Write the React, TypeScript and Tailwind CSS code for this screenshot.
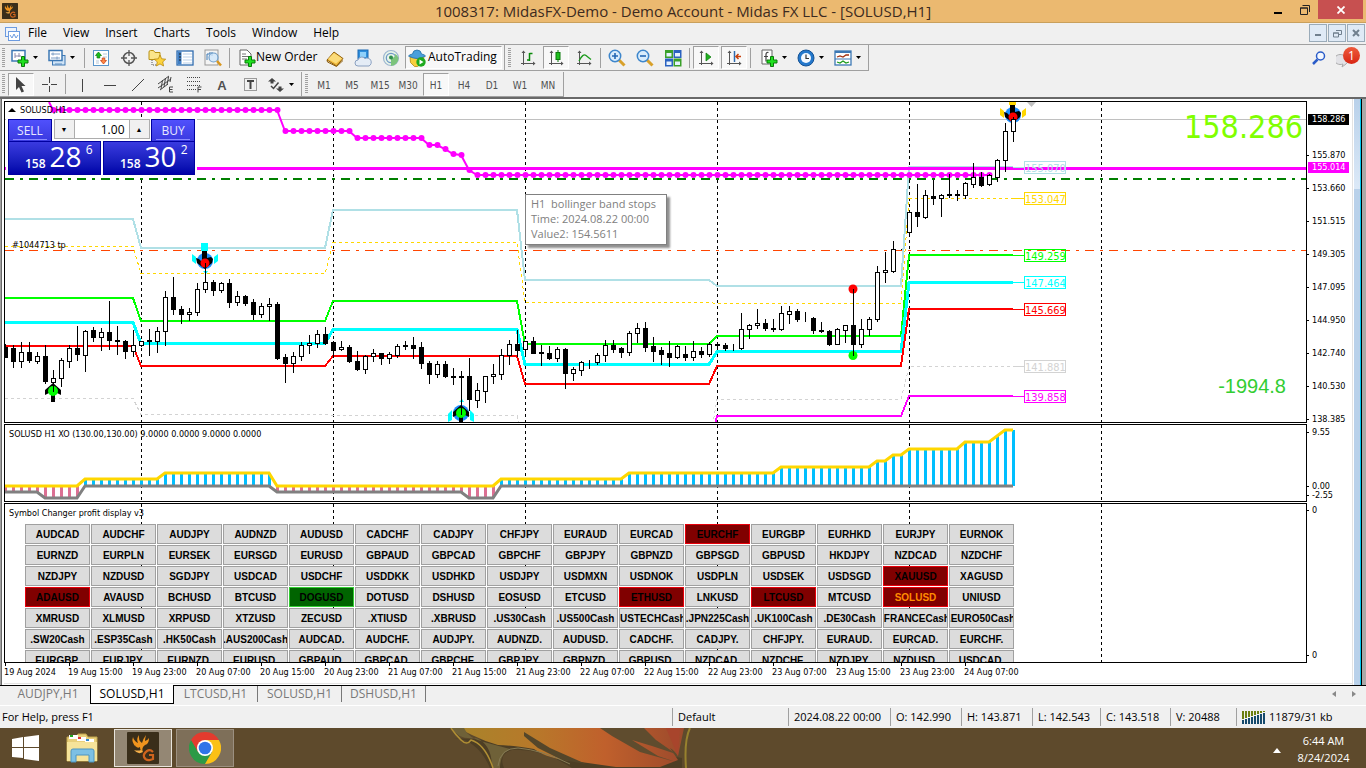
import type { ReactNode } from 'react';

type Candle = [high: number, top: number, bottom: number, low: number, filled: 0 | 1];
type Point = [bar: number, y: number];

const BAR = 8;

// One entry per hour: wick top, body top, body bottom, wick bottom, bearish flag
const CANDLES: Candle[] = [
  [242, 245, 255, 255, 1], [243, 246, 259, 265, 1], [240, 250, 259, 265, 0], [240, 250, 258, 260, 1],
  [250, 254, 259, 261, 0], [243, 254, 279, 281, 1], [268, 276, 280, 289, 0], [256, 258, 276, 284, 0],
  [243, 246, 259, 265, 0], [224, 246, 252, 258, 1], [228, 229, 253, 269, 0], [225, 228, 235, 239, 1],
  [226, 230, 235, 248, 0], [199, 230, 238, 247, 1], [224, 238, 239, 252, 1], [238, 239, 249, 256, 1],
  [228, 243, 249, 254, 0], [239, 239, 243, 244, 0], [227, 238, 239, 253, 1], [225, 229, 239, 250, 0],
  [189, 195, 229, 243, 0], [175, 195, 207, 212, 1], [204, 207, 212, 221, 1], [206, 210, 212, 218, 0],
  [181, 187, 210, 213, 0], [161, 180, 187, 190, 0], [178, 180, 188, 193, 1], [180, 181, 188, 190, 0],
  [177, 181, 200, 205, 1], [189, 194, 200, 203, 0], [193, 194, 201, 203, 1], [197, 200, 212, 217, 1],
  [201, 204, 212, 215, 0], [196, 202, 204, 218, 0], [200, 202, 256, 257, 1], [252, 255, 261, 280, 1],
  [250, 254, 261, 270, 0], [240, 243, 254, 258, 0], [233, 241, 243, 251, 0], [228, 232, 241, 245, 0],
  [225, 232, 241, 242, 1], [239, 240, 248, 255, 1], [239, 245, 247, 248, 0], [243, 245, 259, 260, 1],
  [249, 259, 267, 268, 1], [253, 254, 267, 271, 0], [247, 251, 254, 259, 0], [251, 251, 256, 262, 1],
  [250, 252, 256, 261, 0], [242, 244, 253, 255, 0], [239, 243, 244, 247, 1], [235, 243, 246, 256, 1],
  [240, 245, 261, 266, 1], [259, 261, 272, 281, 1], [259, 262, 272, 275, 0], [259, 262, 274, 275, 1],
  [266, 274, 275, 282, 1], [269, 274, 275, 312, 1], [256, 274, 297, 308, 1], [281, 288, 298, 305, 0],
  [274, 274, 289, 300, 0], [262, 272, 274, 281, 0], [247, 253, 272, 277, 0], [238, 242, 253, 262, 0],
  [228, 242, 248, 254, 1], [239, 239, 247, 252, 0], [235, 239, 251, 251, 1], [243, 250, 251, 263, 1],
  [244, 251, 256, 257, 1], [245, 247, 256, 259, 0], [246, 247, 271, 286, 1], [265, 267, 271, 278, 0],
  [259, 260, 268, 273, 0], [258, 260, 260, 266, 1], [251, 253, 260, 262, 0], [238, 243, 253, 259, 0],
  [238, 243, 247, 250, 1], [245, 246, 250, 255, 1], [229, 231, 250, 253, 0], [221, 226, 231, 240, 0],
  [220, 226, 245, 249, 1], [235, 244, 249, 259, 1], [245, 248, 252, 262, 1], [239, 251, 255, 264, 1],
  [243, 244, 255, 256, 0], [244, 252, 255, 258, 1], [239, 249, 255, 258, 0], [245, 249, 252, 255, 1],
  [240, 242, 252, 254, 0], [241, 242, 243, 245, 1], [241, 243, 246, 248, 1], [242, 245, 245, 248, 1],
  [211, 227, 246, 247, 0], [222, 223, 227, 236, 0], [207, 221, 223, 226, 0], [217, 221, 226, 228, 1],
  [217, 226, 227, 229, 1], [204, 211, 227, 228, 0], [204, 209, 212, 221, 0], [207, 209, 217, 219, 1],
  [210, 216, 216, 219, 1], [215, 216, 228, 231, 1], [220, 228, 229, 230, 1], [228, 229, 242, 243, 1],
  [226, 227, 242, 242, 0], [223, 223, 228, 240, 0], [187, 223, 242, 253, 1], [217, 227, 242, 245, 0],
  [215, 217, 227, 233, 0], [164, 170, 217, 219, 0], [150, 168, 170, 180, 0], [139, 147, 169, 170, 0],
  [147, 147, 147, 147, 1], [110, 110, 130, 133, 0], [82, 110, 114, 124, 1], [88, 93, 115, 116, 0],
  [78, 94, 96, 102, 1], [92, 93, 96, 114, 0], [72, 92, 93, 95, 1], [88, 92, 93, 98, 1],
  [80, 81, 93, 96, 0], [61, 75, 82, 85, 0], [70, 75, 83, 84, 1], [72, 73, 82, 83, 0],
  [57, 58, 75, 79, 0], [21, 29, 58, 69, 0], [15, 17, 29, 39, 0],
];

// Daily pivot levels, drawn as steps with a one-bar slope at each midnight
const DAY_STARTS = [0, 17, 41, 65, 89, 113];

const BANDS = [
  { color: '#b0e0e6', width: 2, dash: undefined, levels: [117, 146, 108, 178, 184, 65] },
  { color: '#ffd700', width: 1, dash: '3 3', levels: [144, 171, 140, 200, 201, 96] },
  { color: '#d3d3d3', width: 1, dash: '3 3', levels: [296, 312, 313, 345, 297, 264] },
  { color: '#ff00ff', width: 2, dash: undefined, levels: [400, 400, 400, 345, 314, 294] },
  { color: '#00ff00', width: 2, dash: undefined, levels: [196, 219, 199, 242, 234, 153] },
  { color: '#00ffff', width: 3, dash: undefined, levels: [220, 241, 227, 262, 249, 180] },
  { color: '#ff0000', width: 2, dash: undefined, levels: [244, 264, 254, 282, 264, 207] },
];

const LEVEL_TAGS = [
  { y: 66, color: '#b0e0e6', text: '155.070' },
  { y: 97, color: '#ffd700', text: '153.047' },
  { y: 154, color: '#00ff00', text: '149.259' },
  { y: 181, color: '#00ffff', text: '147.464' },
  { y: 208, color: '#ff0000', text: '145.669' },
  { y: 265, color: '#d3d3d3', text: '141.881' },
  { y: 295, color: '#ff00ff', text: '139.858' },
];

const STOPS: Point[] = [
  [6, 8], [34, 8], [35, 29], [43, 29], [44, 36], [52, 36], [53, 43], [54, 43],
  [55, 47], [56, 52], [57, 53], [58, 68], [59, 73], [123, 73],
];

const XO_UPPER: Point[] = [
  [0, 61], [9, 61], [10, 54], [19, 54], [20, 48], [33, 48], [34, 61], [61, 61], [62, 54], [77, 54],
  [78, 48], [96, 48], [97, 42], [108, 42], [109, 36], [110, 36], [111, 30], [112, 30], [113, 24],
  [119, 24], [120, 17], [123, 17], [125, 5], [126, 5],
];
const XO_LOWER: Point[] = [
  [0, 67], [4, 67], [5, 73], [9, 73], [10, 61], [33, 61], [34, 67], [57, 67], [58, 73], [61, 73], [62, 61], [126, 61],
];

const SEPARATORS = [17, 41, 65, 89, 113, 137];

const PRICES = ['155.870', '153.660', '151.515', '149.305', '147.095', '144.950', '142.740', '140.530', '138.385'];

const DATES = [
  '19 Aug 2024', '19 Aug 15:00', '19 Aug 23:00', '20 Aug 07:00', '20 Aug 15:00', '20 Aug 23:00',
  '21 Aug 07:00', '21 Aug 15:00', '21 Aug 23:00', '22 Aug 07:00', '22 Aug 15:00', '22 Aug 23:00',
  '23 Aug 07:00', '23 Aug 15:00', '23 Aug 23:00', '24 Aug 07:00',
];

const SYMBOLS = `AUDCAD AUDCHF AUDJPY AUDNZD AUDUSD CADCHF CADJPY CHFJPY EURAUD EURCAD EURCHF EURGBP EURHKD EURJPY EURNOK
EURNZD EURPLN EURSEK EURSGD EURUSD GBPAUD GBPCAD GBPCHF GBPJPY GBPNZD GBPSGD GBPUSD HKDJPY NZDCAD NZDCHF
NZDJPY NZDUSD SGDJPY USDCAD USDCHF USDDKK USDHKD USDJPY USDMXN USDNOK USDPLN USDSEK USDSGD XAUUSD XAGUSD
ADAUSD AVAUSD BCHUSD BTCUSD DOGUSD DOTUSD DSHUSD EOSUSD ETCUSD ETHUSD LNKUSD LTCUSD MTCUSD SOLUSD UNIUSD
XMRUSD XLMUSD XRPUSD XTZUSD ZECUSD .XTIUSD .XBRUSD .US30Cash .US500Cash .USTECHCash .JPN225Cash .UK100Cash .DE30Cash .FRANCECash .EURO50Cash
.SW20Cash .ESP35Cash .HK50Cash .AUS200Cash AUDCAD. AUDCHF. AUDJPY. AUDNZD. AUDUSD. CADCHF. CADJPY. CHFJPY. EURAUD. EURCAD. EURCHF.
EURGBP. EURJPY. EURNZD. EURUSD. GBPAUD. GBPCAD. GBPCHF. GBPJPY. GBPNZD. GBPUSD. NZDCAD. NZDCHF. NZDJPY. NZDUSD. USDCAD.`.split(/\s+/);

const LOSING = ['EURCHF', 'XAUUSD', 'ADAUSD', 'ETHUSD', 'LTCUSD'];

function symbolStyle(symbol: string): string {
  if (symbol === 'SOLUSD') return 'border-red-600 bg-[#800000] text-[#ff8c00]';
  if (symbol === 'DOGUSD') return 'border-[#32cd32] bg-[#006400] text-black';
  if (LOSING.includes(symbol)) return 'border-red-600 bg-[#800000] text-black';
  return 'border-[#a0a0a0] bg-[#dcdcdc] text-black';
}

const toPoints = (points: Point[]) => points.map(([bar, y]) => `${bar * BAR},${y}`).join(' ');

const valueAt = (points: Point[], bar: number): number => {
  const next = points.findIndex(([b]) => b >= bar);
  if (next <= 0) return points[0][1];
  const [b0, y0] = points[next - 1];
  const [b1, y1] = points[next];
  return y0 + ((y1 - y0) * (bar - b0)) / (b1 - b0);
};

const bandPoints = (levels: number[]): Point[] =>
  levels.flatMap((y, i): Point[] => [[DAY_STARTS[i], y], [i < 5 ? DAY_STARTS[i + 1] - 1 : 126, y]]);

/* ---------- chart panes ---------- */

function DayLines() {
  return (
    <g stroke="#000" strokeDasharray="3 3" shapeRendering="crispEdges">
      {SEPARATORS.map((bar) => (
        <line key={bar} x1={bar * BAR + 0.5} x2={bar * BAR + 0.5} y1="0" y2="100%" />
      ))}
    </g>
  );
}

function SignalDown({ x, y, wing }: { x: number; y: number; wing: string }) {
  return (
    <g transform={`translate(${x} ${y})`}>
      <path d="M-4 -18h7v8h-7zM-13 -7l4 3v7l-4 -3zM13 -7l-4 3v7l4 -3zM-2 10h5l-2 3z" fill={wing} />
      <circle r="8" fill="#1e90ff" />
      <path d="M-3 -10h5v7l4 -1 2 2 -1 4 -7 6 -8 -6 -1 -5 3 1 3 3z" fill="#000" />
      <circle cy="2" r="4.5" fill="#f00" />
    </g>
  );
}

function SignalUp({ x, y, wing }: { x: number; y: number; wing?: string }) {
  return (
    <g transform={`translate(${x} ${y})`}>
      {wing && <path d="M-2 -11h5l-2 -3zM-13 9v-8l4 -4v10zM13 9v-8l-4 -4v10z" fill={wing} />}
      {wing && <circle r="8" fill="#1e90ff" />}
      <path d="M0 -8l8 7v5l-6 -3v10h-4v-10l-6 3v-5z" fill="#000" />
      <circle r="5" fill="#0f0" />
    </g>
  );
}

function PriceChart() {
  const dots = Array.from({ length: 118 }, (_, i) => i + 6);
  return (
    <svg className="block h-80 w-full" aria-label="SOLUSD H1 price chart">
      <DayLines />
      <line x1="0" x2="100%" y1="17.5" y2="17.5" stroke="#c0c0c0" shapeRendering="crispEdges" />
      <line x1="0" x2="100%" y1="148.5" y2="148.5" stroke="#ff4500" strokeDasharray="9 6 3 6" shapeRendering="crispEdges" />
      <line x1="0" x2="100%" y1="77" y2="77" stroke="#008000" strokeWidth="2" strokeDasharray="9 6 3 6" shapeRendering="crispEdges" />
      {BANDS.map((band) => (
        <polyline
          key={band.color}
          points={toPoints(bandPoints(band.levels))}
          fill="none"
          stroke={band.color}
          strokeWidth={band.width}
          strokeDasharray={band.dash}
          transform={band.width === 2 ? undefined : 'translate(0 0.5)'}
          shapeRendering="crispEdges"
        />
      ))}
      <line x1="0" x2="100%" y1="66.5" y2="66.5" stroke="#f0f" strokeWidth="3" shapeRendering="crispEdges" />
      <polyline points={`44,0 ${toPoints(STOPS)}`} fill="none" stroke="#f0f" strokeWidth="2" />
      {dots.map((bar) => (
        <circle key={bar} cx={bar * BAR + 0.5} cy={valueAt(STOPS, bar)} r="3" fill="#f0f" />
      ))}
      {LEVEL_TAGS.map((tag) => (
        <g key={tag.text}>
          <path d={`M1008 ${tag.y - 0.5}h11`} stroke={tag.color} />
          <rect x="1019.5" y={tag.y - 6.5} width="41" height="12" fill="none" stroke={tag.color} />
          <text x="1020" y={tag.y + 4} fill={tag.color} className="font-['DejaVu_Sans_Condensed',sans-serif] text-[11px]">
            {tag.text}
          </text>
        </g>
      ))}
      <circle cx="848" cy="187" r="4.5" fill="#f00" />
      <circle cx="848" cy="253.5" r="4.5" fill="#0f0" />
      <SignalDown x={200} y={159} wing="#0ff" />
      <SignalDown x={1008} y={13} wing="#ffd700" />
      <SignalUp x={48} y={289} />
      <SignalUp x={456} y={311} wing="#0ff" />
      <g stroke="#000" shapeRendering="crispEdges">
        {CANDLES.map(([high, top, bottom, low, filled], i) => (
          <g key={i}>
            <line x1={i * BAR + 0.5} x2={i * BAR + 0.5} y1={high} y2={low + 1} />
            <rect x={i * BAR - 1.5} y={top + 0.5} width="4" height={bottom - top} fill={filled ? '#000' : '#fff'} />
          </g>
        ))}
      </g>
      <path d="M1022 0h9l-4.500 5z" fill="#c0c0c0" />
      <path d="M3 10l4 -4 4 4z" fill="#000" />
      <g className="font-['DejaVu_Sans_Condensed',sans-serif] text-[9px]">
        <text x="15" y="11">SOLUSD,H1</text>
        <text x="7" y="146">#1044713 tp</text>
      </g>
    </svg>
  );
}

function XoChart() {
  const bars = Array.from({ length: 127 }, (_, i) => i);
  return (
    <svg className="block h-[76px] w-full" aria-label="XO indicator">
      <DayLines />
      {bars.map((bar) => {
        const up = valueAt(XO_UPPER, bar);
        const down = valueAt(XO_LOWER, bar);
        return (
          <g key={bar} shapeRendering="crispEdges">
            {up < 60 && <rect x={bar * BAR - 1} y={up} width="3" height={61 - up} fill="#00bfff" />}
            {down > 62 && <rect x={bar * BAR - 1} y="61" width="3" height={down - 61} fill="#db7093" />}
          </g>
        );
      })}
      <polyline points={toPoints(XO_LOWER)} fill="none" stroke="#808080" strokeWidth="3" />
      <polyline points={toPoints(XO_UPPER)} fill="none" stroke="#ffd700" strokeWidth="3" />
      <text x="4" y="12" className="font-['DejaVu_Sans_Condensed',sans-serif] text-[9px]">
        SOLUSD H1 XO (130.00,130.00) 9.0000 0.0000 9.0000 0.0000
      </text>
    </svg>
  );
}

function Quote({ small, big, sup }: { small: string; big: string; sup: string }) {
  return (
    <>
      <span className="text-xs leading-4 font-semibold">{small}</span>
      <span className="mb-1 ml-1 text-[28px] leading-6">{big}</span>
      <span className="mb-4 ml-1 text-xs leading-3">{sup}</span>
    </>
  );
}

function OneClickPanel() {
  const half = 'flex h-[34px] items-end border border-[#0000a0] bg-linear-to-b from-[#3a3ae0] to-[#0000a8] pb-0.5 pl-4 text-white';
  const head = 'h-[22px] w-11 border border-b-0 border-[#0000a0] bg-linear-to-b from-[#5050fc] to-[#3a3ae0] px-1 text-xs leading-4 text-[#e8e8ff]';
  const spin = 'flex h-full w-[19px] items-center justify-center bg-[#f0f0f0] text-[7px]';
  return (
    <div className="absolute top-[15px] left-px w-[191px] bg-white p-0.5">
      <div className="flex justify-between">
        <button className={head}>
          <span className="block border-b border-[#8c8cff] pt-px">SELL</span>
        </button>
        <div className="flex h-5 w-24 items-center border border-[#adadad] bg-white">
          <button className={spin} aria-label="Decrease volume">▼</button>
          <input
            aria-label="Volume"
            defaultValue="1.00"
            className="h-full w-14 min-w-0 border-x border-[#adadad] px-1 text-right text-xs outline-none"
          />
          <button className={spin} aria-label="Increase volume">▲</button>
        </div>
        <button className={head}>
          <span className="block border-b border-[#8c8cff] pt-px">BUY</span>
        </button>
      </div>
      <div className="flex gap-0.5">
        <button aria-label="Sell at 158.286" className={`${half} w-[93px]`}>
          <Quote small="158" big="28" sup="6" />
        </button>
        <button aria-label="Buy at 158.302" className={`${half} w-[92px]`}>
          <Quote small="158" big="30" sup="2" />
        </button>
      </div>
    </div>
  );
}

function Tick({ children }: { children?: ReactNode }) {
  return (
    <span className="flex items-center gap-[3px]">
      <span className="h-px w-0.5 bg-black" />
      {children}
    </span>
  );
}

function ChartWindow() {
  return (
    <div className="flex border-t-2 border-t-[#696969] bg-white">
      <div className="w-0.5 border-l border-[#a0a0a0] bg-[#696969]" />
      <div className="min-w-0 flex-1 pt-0.5 pl-0.5 font-['DejaVu_Sans_Condensed',sans-serif] text-[9px] leading-[9px]">
        {/* Price */}
        <div className="flex">
          <div className="relative min-w-0 flex-1 overflow-hidden border border-black font-['Open_Sans',sans-serif]">
            <PriceChart />
            <OneClickPanel />
            <div className="absolute top-[7px] right-[3px] font-['DejaVu_Sans_Condensed',sans-serif] text-[32px] leading-9 text-[#7fff00]">
              158.286
            </div>
            <div className="absolute right-5 bottom-6 font-['Liberation_Sans',sans-serif] text-xl leading-6 text-[#32cd32]">-1994.8</div>
            <div className="absolute top-[92px] left-[520px] w-[142px] border border-[#808080] bg-white px-[5px] pt-px pb-[3px] text-[11px] leading-[15px] whitespace-pre text-[#808080] shadow-[3px_3px_2px_#909090]">
              {'H1  bollinger band stops\nTime: 2024.08.22 00:00\nValue2: 154.5611'}
            </div>
          </div>
          <div className="relative h-[322px] w-[45px] overflow-hidden pt-[38px]">
            {PRICES.map((price) => (
              <div key={price} className="flex h-[33px] items-center">
                <Tick>{price}</Tick>
              </div>
            ))}
            <span className="absolute top-[13px] left-px bg-black py-px pr-1 pl-1 text-white">158.286</span>
            <span className="absolute top-[61px] left-px bg-[#f0f] py-px pr-1 pl-1 text-white">155.014</span>
          </div>
        </div>

        {/* XO indicator */}
        <div className="mt-px flex">
          <div className="min-w-0 flex-1 overflow-hidden border border-black">
            <XoChart />
          </div>
          <div className="flex w-[45px] flex-col justify-between pt-1 pb-0.5">
            <Tick>9.55</Tick>
            <div>
              <Tick>0.00</Tick>
              <Tick>-2.55</Tick>
            </div>
          </div>
        </div>

        {/* Symbol changer */}
        <div className="mt-px flex">
          <div className="relative h-40 min-w-0 flex-1 overflow-hidden border border-black">
            <svg className="absolute inset-0 h-full w-full" aria-hidden="true">
              <DayLines />
            </svg>
            <div className="relative px-1 pt-1 leading-[10px]">Symbol Changer profit display v3</div>
            <div className="relative mt-1.5 ml-5 grid w-max grid-cols-[repeat(15,65px)] gap-px font-['Liberation_Sans',sans-serif] text-[10px] leading-5 font-bold">
              {SYMBOLS.map((symbol) => (
                <button key={symbol} className={`flex h-5 justify-center overflow-hidden border ${symbolStyle(symbol)}`}>
                  {symbol}
                </button>
              ))}
            </div>
          </div>
          <div className="flex w-[45px] flex-col justify-between py-[3px]">
            <Tick>0</Tick>
            <Tick>0</Tick>
          </div>
        </div>

        {/* Time axis */}
        <div className="flex h-5 overflow-hidden">
          {DATES.map((date) => (
            <div key={date} className="w-16 shrink-0 whitespace-nowrap">
              <div className="ml-px h-[3px] w-px bg-black" />
              <div className="pt-0.5">{date}</div>
            </div>
          ))}
        </div>
        <div className="h-0.5 border-t border-[#e3e3e3]" />
      </div>
      {/* Edge of the window behind */}
      <div className="flex w-3.5 border-l border-[#e3e3e3] bg-[#a9a9a9]">
        <div className="w-px bg-white" />
        <div className="w-1.5 bg-[#b9d1ea]">
          <div className="h-[90px] bg-linear-to-b from-[#b9d1ea] to-[#dce9f7]" />
        </div>
        <div className="w-px bg-[#00c8f0]" />
        <div className="w-px bg-black" />
      </div>
    </div>
  );
}

/* ---------- icons ---------- */

function Svg({ children, size = 18 }: { children: ReactNode; size?: number }) {
  return (
    <svg width={size} height={size} viewBox="0 0 18 18" fill="none" aria-hidden="true">
      {children}
    </svg>
  );
}

const plus = <path d="M10.500 7.500h3v3.500h3.500v3h-3.500v3.500h-3v-3.500h-3.500v-3h3.500z" fill="#1fe01f" stroke="#0a7a0a" />;
const axes = (
  <>
    <path d="M4.500 2v14M2 14.500h14" stroke="#555" />
    <path d="M2.500 4l2-2.500 2 2.500zM14 12.500l2.500 2-2.500 2z" fill="#555" />
  </>
);

const NewChartIcon = () => (
  <Svg>
    <rect x="1" y="1.500" width="13" height="10.500" fill="#fff" stroke="#3c78b4" strokeWidth="1.500" />
    <path d="M4 4v5M4 7h6M8 4v4" stroke="#88a" />
    {plus}
  </Svg>
);
const ProfilesIcon = () => (
  <Svg>
    <rect x="4.500" y="6.500" width="12.500" height="9.500" fill="#cfe3f6" stroke="#3c78b4" />
    <rect x="1" y="1.500" width="13" height="10" fill="#fff" stroke="#3c78b4" strokeWidth="1.500" />
    <path d="M3 5h9M3 9h9M5 3.500v3M9 7.500v3" stroke="#7a9cc4" />
    <path d="M7 15h7" stroke="#5a8cc0" />
  </Svg>
);
const MarketIcon = () => (
  <Svg>
    <rect x="1.500" y="1.500" width="15" height="15" fill="#fff" stroke="#5a96cc" />
    <path d="M4 5h2M11 5h4M4 8h2M11 8h4M4 12h3M4 14h3" stroke="#b8c8d8" />
    <path d="M6.500 3l3 3.500h-1.700v2.500h-2.600v-2.500h-1.700z" fill="#18c018" stroke="#0a7a0a" strokeWidth=".7" />
    <path d="M11.500 15l-3-3.500h1.700v-2.500h2.600v2.500h1.700z" fill="#f84" stroke="#c33a10" strokeWidth=".7" />
  </Svg>
);
const TargetIcon = () => (
  <Svg>
    <circle cx="9" cy="9" r="5.500" stroke="#555" strokeWidth="1.500" />
    <path d="M9 1v6M9 11v6M1 9h6M11 9h6" stroke="#555" strokeWidth="1.300" />
  </Svg>
);
const NavigatorIcon = () => (
  <Svg>
    <path d="M1 3q0-1.500 1.500-1.500h3l1.500 2h5v7h-11z" fill="#fbe58a" stroke="#b99216" />
    <path d="M4 11v5h4" stroke="#555" strokeDasharray="1 1" />
    <path d="M12 6l1.700 3.800 4 .4-3 2.700.9 4.100-3.600-2.100-3.600 2.100.9-4.100-3-2.700 4-.4z" fill="#fdd33c" stroke="#b98a10" strokeWidth=".8" />
  </Svg>
);
const TerminalIcon = () => (
  <Svg>
    <rect x="1" y="2" width="16" height="14" fill="#fff" stroke="#2f6cb0" strokeWidth="1.300" />
    <path d="M1.500 2.500h4v13h-4z" fill="#3f7ec4" />
    <path d="M7 5h9M7 8h9M7 11h9M7 14h9" stroke="#b9cfe8" />
    <path d="M3 5h2M3 8h2M3 11h2" stroke="#222" />
  </Svg>
);
const TesterIcon = () => (
  <Svg>
    <rect x="1" y="1" width="13" height="15" fill="#f4f4f4" stroke="#999" />
    <path d="M3 11V5h3V3M8 3v4" stroke="#3c78b4" />
    <circle cx="9.500" cy="8.500" r="4.500" fill="#cfe6fa" fillOpacity=".8" stroke="#6f9fcb" strokeWidth="1.200" />
    <path d="M13 12l4 4.500" stroke="#d8961e" strokeWidth="2.500" />
  </Svg>
);
const OrderIcon = () => (
  <Svg>
    <path d="M2 1h7l4 4v11h-11z" fill="#fff" stroke="#666" />
    <path d="M4 5h4M4 7.500h7M4 10h5" stroke="#777" />
    {plus}
  </Svg>
);
const BookIcon = () => (
  <Svg>
    <path d="M1 11l7-8 9 6.500-6.500 7.500z" fill="#f0b93a" stroke="#8f5f0c" />
    <path d="M2 10l6-6 8 5.500-6 5z" fill="#fbdb7a" />
    <path d="M1 11l.5 2 9 4.500 6.500-6" stroke="#8f5f0c" />
  </Svg>
);
const CloudIcon = () => (
  <Svg>
    <rect x="4" y="1" width="10" height="9" fill="#2f8fdc" stroke="#1b69b4" />
    <path d="M6 3h6v5h-6z" fill="#8fd0fa" />
    <path d="M4 17a3 3 0 010-6 4 4 0 017-1.500 3.700 3.700 0 014 7.500z" fill="#e4ecf6" stroke="#8aa0c0" />
  </Svg>
);
const SignalIcon = () => (
  <Svg>
    <circle cx="9" cy="9" r="7.500" fill="#e8f4e8" stroke="#9db6d0" strokeWidth="1.200" />
    <circle cx="9" cy="9" r="4.700" stroke="#6f98c8" strokeWidth="1.300" />
    <path d="M9 9v8a8 8 0 007.500-8q-1-3-3.500-4 .5 4-4 4z" fill="#7cc47c" />
    <circle cx="9" cy="8.500" r="2" fill="#2f8f4f" />
  </Svg>
);
const AutoIcon = () => (
  <Svg>
    <path d="M2 8q7 3 14 0l-1.500 6-5 3.500h-3l-4-4z" fill="#f8cf3c" stroke="#b08a16" strokeWidth=".8" />
    <path d="M.5 7q1-1.500 4-2 .5-4 4.500-4t4.500 4q3 .5 4 2-8 5-17 0z" fill="#4aa0dc" stroke="#2470a8" strokeWidth=".8" />
    <circle cx="13" cy="13" r="4.700" fill="#1faa1f" />
    <path d="M11.500 10.500l4 2.500-4 2.500z" fill="#fff" />
  </Svg>
);
const BarsIcon = () => (
  <Svg>
    {axes}
    <path d="M8 11h2.500M10.500 4v8M10.500 4.500h3" stroke="#0a8a0a" strokeWidth="1.500" />
  </Svg>
);
const CandleIcon = () => (
  <Svg>
    {axes}
    <path d="M11 1v12" stroke="#0a7a0a" />
    <rect x="9" y="3.500" width="4" height="7" fill="#1fc01f" stroke="#0a7a0a" />
  </Svg>
);
const LineIcon = () => (
  <Svg>
    {axes}
    <path d="M4 12q4-8 7-5.500t5 4" stroke="#1a9a1a" strokeWidth="1.300" />
  </Svg>
);
const LensIcon = ({ minus = false }: { minus?: boolean }) => (
  <Svg>
    <path d="M11 11l5.500 5.500" stroke="#d8a02a" strokeWidth="3" />
    <circle cx="7" cy="7" r="5.700" fill="#d8ecfc" stroke="#3d86cc" strokeWidth="1.500" />
    <path d={minus ? 'M4 7h6' : 'M4 7h6M7 4v6'} stroke="#2468b4" strokeWidth="1.600" />
  </Svg>
);
const TileIcon = () => (
  <Svg>
    <path d="M1 1h8v8h-8zM9.500 9.500h8v8h-8z" fill="#3aa02a" />
    <path d="M9.500 1h8v8h-8zM1 9.500h8v8h-8z" fill="#2a62c0" />
    <path d="M2.500 4h5v3.500h-5zM11 4h5v3.500h-5zM2.500 12.500h5v3.500h-5zM11 12.500h5v3.500h-5z" fill="#e6f2ff" />
  </Svg>
);
const ScrollIcon = () => (
  <Svg>
    {axes}
    <path d="M9 4l5 4-5 4z" fill="#1fb01f" stroke="#0a7a0a" strokeWidth=".7" />
  </Svg>
);
const ShiftIcon = () => (
  <Svg>
    {axes}
    <path d="M9.500 2v11" stroke="#2f6cb0" strokeWidth="1.500" />
    <path d="M16 7.500h-4M13.500 5l-2.500 2.500 2.500 2.500" stroke="#c8400c" strokeWidth="1.500" />
  </Svg>
);
const IndicatorIcon = () => (
  <Svg>
    <path d="M2 1h10v14h-10z" fill="#fff" stroke="#666" />
    <path d="M8.500 3.500q-2.500-.5-2.500 2v7M4 7.500h4" stroke="#444" strokeWidth="1.200" />
    {plus}
  </Svg>
);
const ClockIcon = () => (
  <Svg>
    <circle cx="9" cy="9" r="8" fill="#2478cc" stroke="#155294" />
    <circle cx="9" cy="9" r="5" fill="#f4f9ff" />
    <path d="M9 5.500v4h3" stroke="#333" strokeWidth="1.200" />
  </Svg>
);
const TemplateIcon = () => (
  <Svg>
    <rect x="1" y="2" width="16" height="14" fill="#fff" stroke="#3c78b4" strokeWidth="1.300" />
    <path d="M1 3h16" stroke="#3c78b4" strokeWidth="2" />
    <path d="M3 8l3-1 3 1 3-2 3 0" stroke="#a03010" strokeWidth="1.300" />
    <path d="M1 10h16" stroke="#3c78b4" />
    <path d="M3 13l3 1 3-2 3 2 3-1" stroke="#1a9a1a" strokeWidth="1.300" />
  </Svg>
);

const CursorIcon = () => (
  <Svg>
    <path d="M4 2v13l3-3 2.500 5.500 2.500-1-2.500-5.500h4z" fill="#444" />
  </Svg>
);
const CrossIcon = () => (
  <Svg>
    <path d="M9.500 2v6M9.500 11v6M2 9.500h6M11 9.500h6" stroke="#444" />
  </Svg>
);
const VLineIcon = () => <Svg><path d="M9.500 4v13" stroke="#444" /></Svg>;
const HLineIcon = () => <Svg><path d="M3 10.500h12" stroke="#444" /></Svg>;
const TrendIcon = () => <Svg><path d="M3 16l12-12" stroke="#444" /></Svg>;
const ChannelIcon = () => (
  <Svg>
    <path d="M1 13l13-9M3 15l8-6M1 9l11-8M4 14l1.500-9M7 12l1.500-9M10 10l1.500-8M13 7l1-5" stroke="#444" />
    <path d="M16 12h-3.500v5h3.500M12.500 14.500h3" stroke="#444" />
  </Svg>
);
const FiboIcon = () => (
  <Svg>
    <path d="M2 2.500h14M2 6.500h14M2 10.500h14M2 14.500h9" stroke="#444" strokeDasharray="1 1" />
    <path d="M16.500 12h-3.500v5.500M13 14.500h3" stroke="#444" />
  </Svg>
);
const LabelIcon = () => (
  <Svg>
    <rect x="3.500" y="3.500" width="12" height="12" stroke="#444" strokeDasharray="1 1" />
    <path d="M6 6h7M9.500 6v8" stroke="#444" strokeWidth="2" />
  </Svg>
);
const ArrowsIcon = () => (
  <Svg>
    <path d="M5 3l4 3.500h-2.500v2h-3v-2h-2.500zM13 17l-4-3.500h2.500v-2h3v2h2.500z" fill="#444" />
    <path d="M4 11l2.500 2.500 5-6" stroke="#444" strokeWidth="1.500" />
  </Svg>
);

function BrandIcon({ size }: { size: number }) {
  return (
    <svg width={size} height={size} viewBox="0 0 32 32" aria-hidden="true">
      <rect width="32" height="32" rx="1" fill="#3a2e1a" />
      <path d="M9 15Q4 10 6 5q1 4 5 6-2-4 1-8-1 5 3 8 1-4 4-8-1 4-1 6 2 0 4-3 0 6-4 7-4 3-2 7-3-1-3-5-3 2-5-2z" fill="#f0941e" />
      <path d="M7 18q4 1 7 0l2 2q-5 3-9-2z" fill="#f6b04a" />
      <path d="M26 20q-3-3-6-1-4 3-3 6 2 4 6 3l3-1v-4h-4" fill="none" stroke="#d0641e" strokeWidth="2.200" />
    </svg>
  );
}

/* ---------- toolbars ---------- */

const PRESSED = 'border border-[#a0a0a0] border-r-white border-b-white bg-[#f8f8f8]';

function Tool({ label, pressed = false, children }: { label: string; pressed?: boolean; children: ReactNode }) {
  return (
    <div className="w-7 shrink-0 px-px">
      <button aria-label={label} className={`flex h-[23px] w-full items-center justify-center ${pressed ? PRESSED : ''}`}>
        {children}
      </button>
    </div>
  );
}

function DropTool({ label, children }: { label: string; children: ReactNode }) {
  return (
    <button aria-label={label} className="flex h-[23px] w-[37px] shrink-0 items-center gap-1 pl-[3px]">
      {children}
      <Caret />
    </button>
  );
}

function Caret() {
  return (
    <svg width="5" height="3" viewBox="0 0 5 3" aria-hidden="true">
      <path d="M0 0h5l-2.500 3z" fill="#000" />
    </svg>
  );
}

function Grip() {
  return (
    <span className="h-5 w-[3px] shrink-0 bg-[repeating-linear-gradient(180deg,#a0a0a0_0px,#a0a0a0_1px,transparent_1px,transparent_2px)]" />
  );
}

function Divider() {
  return <span className="mx-0.5 h-5 w-px shrink-0 bg-[#a0a0a0]" />;
}

function MainToolbar() {
  return (
    <div className="flex h-[27px] items-start justify-between">
      <div className="flex">
        <div className="flex h-[26px] items-center border-r border-b border-[#a0a0a0] pr-0.5 pl-0.5">
          <Grip />
          <span className="w-[3px]" />
          <DropTool label="New Chart"><NewChartIcon /></DropTool>
          <DropTool label="Profiles"><ProfilesIcon /></DropTool>
          <Divider />
          <Tool label="Market Watch"><MarketIcon /></Tool>
          <Tool label="Data Window"><TargetIcon /></Tool>
          <Tool label="Navigator"><NavigatorIcon /></Tool>
          <Tool label="Terminal"><TerminalIcon /></Tool>
          <Tool label="Strategy Tester"><TesterIcon /></Tool>
          <Divider />
          <button className="flex h-[23px] w-[89px] items-center pl-1.5">
            <OrderIcon />
            <span className="pb-0.5 whitespace-nowrap">New Order</span>
          </button>
          <Tool label="MetaEditor"><BookIcon /></Tool>
          <Tool label="Virtual Hosting"><CloudIcon /></Tool>
          <Tool label="Signals"><SignalIcon /></Tool>
          <button className={`flex h-[23px] w-[97px] items-center gap-0.5 pl-0.5 ${PRESSED}`}>
            <AutoIcon />
            <span className="pb-0.5">AutoTrading</span>
          </button>
        </div>
        <div className="flex h-[26px] items-center border-r border-b border-[#a0a0a0] pl-[3px]">
          <Grip />
          <span className="w-[3px]" />
          <Tool label="Bar Chart"><BarsIcon /></Tool>
          <Tool label="Candlesticks" pressed><CandleIcon /></Tool>
          <Tool label="Line Chart"><LineIcon /></Tool>
          <Divider />
          <Tool label="Zoom In"><LensIcon /></Tool>
          <Tool label="Zoom Out"><LensIcon minus /></Tool>
          <Tool label="Tile Windows"><TileIcon /></Tool>
          <Divider />
          <Tool label="Auto Scroll" pressed><ScrollIcon /></Tool>
          <Tool label="Chart Shift" pressed><ShiftIcon /></Tool>
          <Divider />
          <span className="w-1" />
          <DropTool label="Indicators"><IndicatorIcon /></DropTool>
          <DropTool label="Periods"><ClockIcon /></DropTool>
          <DropTool label="Templates"><TemplateIcon /></DropTool>
        </div>
      </div>
      <div className="flex items-center gap-2.5 pt-px pr-1.5">
        <button aria-label="Search">
          <svg width="14" height="14" viewBox="0 0 14 14" fill="none" aria-hidden="true">
            <circle cx="8.500" cy="5" r="4" fill="#f4f8ff" stroke="#2a5cc8" strokeWidth="1.500" />
            <path d="M5.500 8.500l-4.500 4.500" stroke="#2a5cc8" strokeWidth="2.500" />
          </svg>
        </button>
        <button aria-label="Messages" className="relative h-6 w-6">
          <svg className="absolute bottom-0.5 left-0" width="16" height="14" viewBox="0 0 16 14" aria-hidden="true">
            <path d="M7 1a6 5 0 100 9l-1 3 4-3a6 5 0 00-3-9z" fill="#e2e2e6" stroke="#aaa" />
          </svg>
          <span className="absolute top-px right-0 h-[17px] w-[17px] rounded-full bg-linear-to-b from-[#ee5a3c] to-[#d82210] text-center text-xs leading-[17px] text-white">
            1
          </span>
        </button>
      </div>
    </div>
  );
}

const TIMEFRAMES = ['M1', 'M5', 'M15', 'M30', 'H1', 'H4', 'D1', 'W1', 'MN'];

function LineToolbar() {
  return (
    <div className="flex h-[25px]">
      <div className="flex items-center border-r border-b border-[#a0a0a0] pl-0.5">
        <Grip />
        <span className="w-0.5" />
        <Tool label="Cursor" pressed><CursorIcon /></Tool>
        <Tool label="Crosshair"><CrossIcon /></Tool>
        <Divider />
        <Tool label="Vertical Line"><VLineIcon /></Tool>
        <Tool label="Horizontal Line"><HLineIcon /></Tool>
        <Tool label="Trendline"><TrendIcon /></Tool>
        <Tool label="Equidistant Channel"><ChannelIcon /></Tool>
        <Tool label="Fibonacci Retracement"><FiboIcon /></Tool>
        <Tool label="Text">
          <span className="pt-1 font-['Liberation_Sans',sans-serif] text-[13px] leading-4 font-bold text-[#505050]">A</span>
        </Tool>
        <Tool label="Text Label"><LabelIcon /></Tool>
        <DropTool label="Arrows"><ArrowsIcon /></DropTool>
      </div>
      <div className="flex items-center border-r border-b border-[#a0a0a0] pr-px pl-[3px] font-['DejaVu_Sans_Condensed',sans-serif] text-[10px] text-[#505050]">
        <Grip />
        <span className="w-0.5" />
        {TIMEFRAMES.map((tf) => (
          <Tool key={tf} label={tf} pressed={tf === 'H1'}>
            <span className="pt-[3px]">{tf}</span>
          </Tool>
        ))}
      </div>
    </div>
  );
}

function TitleBar() {
  return (
    <header className="flex h-[23px] border-b border-[#c9a05c] bg-[#ebb970] text-[#3c2a20]">
      <div className="w-28 pt-[3px] pl-0.5">
        <BrandIcon size={16} />
      </div>
      <h1 className="flex-1 text-center text-[15px] leading-[23px] whitespace-nowrap">
        1008317: MidasFX-Demo - Demo Account - Midas FX LLC - [SOLUSD,H1]
      </h1>
      <div className="flex h-[19px] w-28 justify-end pr-[3px]">
        <button aria-label="Minimize" className="flex w-[26px] items-center justify-center">
          <span className="mt-1.5 h-0.5 w-2 bg-black" />
        </button>
        <button aria-label="Restore" className="flex w-[27px] items-center justify-center">
          <svg width="10" height="10" viewBox="0 0 10 10" fill="none" stroke="#222" aria-hidden="true">
            <path d="M.5 3h7v6.500h-7zM0 3h8" />
            <path d="M2.500 .5h7v6.500" />
          </svg>
        </button>
        <button aria-label="Close" className="flex w-[45px] items-center justify-center bg-[#c75050]">
          <svg width="8" height="8" viewBox="0 0 8 8" stroke="#fff" strokeWidth="1.800" aria-hidden="true">
            <path d="M.5 .5l7 7M7.500 .5l-7 7" />
          </svg>
        </button>
      </div>
    </header>
  );
}

function MenuBar() {
  const mdi = 'flex h-[18px] w-[18px] items-center justify-center border border-[#9aabb9] bg-[#dfeaf6]';
  return (
    <nav className="flex h-[22px] justify-between border-b border-[#a0a0a0]">
      <div className="flex items-center">
        <span className="w-[27px] pl-1">
          <svg width="16" height="16" viewBox="0 0 16 16" fill="none" aria-hidden="true">
            <rect x="1.500" y="1.500" width="11" height="9" fill="#eef4fc" stroke="#6c9be0" />
            <rect x="4.500" y="5.500" width="11" height="9" fill="#fff" stroke="#6c9be0" />
            <path d="M6 9l2 3 2-4 2 4 2-3" stroke="#6c9be0" />
          </svg>
        </span>
        {['File', 'View', 'Insert', 'Charts', 'Tools', 'Window', 'Help'].map((item) => (
          <button key={item} className="mr-4 pb-0.5 first-of-type:ml-px">
            {item}
          </button>
        ))}
      </div>
      <div className="flex gap-px pt-px pr-px">
        <button aria-label="Minimize chart" className={mdi}>
          <span className="mt-1 h-0.5 w-1.5 bg-[#70808f]" />
        </button>
        <button aria-label="Restore chart" className={mdi}>
          <svg width="9" height="9" viewBox="0 0 9 9" fill="none" stroke="#70808f" aria-hidden="true">
            <path d="M.5 4h5v4h-5zM0 4h6M3 1.500h5.500v4H6" />
          </svg>
        </button>
        <button aria-label="Close chart" className={mdi}>
          <svg width="8" height="8" viewBox="0 0 8 8" stroke="#70808f" strokeWidth="2" aria-hidden="true">
            <path d="M1 1l6 6M7 1l-6 6" />
          </svg>
        </button>
      </div>
    </nav>
  );
}

/* ---------- bottom bars ---------- */

const TABS = ['AUDJPY,H1', 'SOLUSD,H1', 'LTCUSD,H1', 'SOLUSD,H1', 'DSHUSD,H1'];

function ChartTabs() {
  return (
    <div className="flex h-5 justify-between">
      <div className="w-1.5 border-t border-black" />
      {TABS.map((tab, i) => (
        <button
          key={i}
          className={
            i === 1
              ? 'flex h-[19px] w-[84px] items-start justify-center border-x border-b border-black bg-white pt-px leading-4'
              : 'flex w-[84px] items-start border-t border-black leading-4 text-[#787878]'
          }
        >
          <span className={i > 1 ? 'w-full border-r border-[#787878]' : 'w-full'}>{tab}</span>
        </button>
      ))}
      <div className="flex flex-1 items-center justify-end gap-4 border-t border-black pr-2.5 pb-1">
        <button aria-label="Scroll tabs left">
          <svg width="4" height="6" viewBox="0 0 4 6" aria-hidden="true"><path d="M4 0v6l-4-3z" fill="#888" /></svg>
        </button>
        <button aria-label="Scroll tabs right">
          <svg width="4" height="6" viewBox="0 0 4 6" aria-hidden="true"><path d="M0 0v6l4-3z" fill="#888" /></svg>
        </button>
      </div>
    </div>
  );
}

function Cell({ className, children }: { className: string; children: ReactNode }) {
  return <div className={`h-[18px] border-l border-[#a0a0a0] pl-[5px] leading-[18px] whitespace-nowrap ${className}`}>{children}</div>;
}

function StatusBar() {
  return (
    <footer className="flex h-[23px] items-center border-t border-white text-[11px]">
      <div className="flex-1 pl-0.5">For Help, press F1</div>
      <Cell className="w-[116px]">Default</Cell>
      <Cell className="w-[102px]">2024.08.22 00:00</Cell>
      <Cell className="w-[71px]">O: 142.990</Cell>
      <Cell className="w-[71px]">H: 143.871</Cell>
      <Cell className="w-[68px]">L: 142.543</Cell>
      <Cell className="w-[70px]">C: 143.518</Cell>
      <Cell className="w-[66px]">V: 20488</Cell>
      <Cell className="flex w-[130px] items-center gap-1">
        <svg width="23" height="13" viewBox="0 0 23 13" aria-hidden="true">
          {Array.from({ length: 8 }, (_, i) => (
            <g key={i}>
              <rect x={i * 3} y="0" width="2" height={8 - i} fill="#6b7f10" />
              <rect x={i * 3} y={9 - i} width="2" height={4 + i} fill="#164a6c" />
            </g>
          ))}
        </svg>
        11879/31 kb
      </Cell>
    </footer>
  );
}

function Taskbar() {
  return (
    <div className="relative flex h-10 items-stretch overflow-hidden bg-[#5e4a2c] text-white">
      <svg className="absolute top-0 left-[440px]" width="270" height="40" viewBox="0 0 270 40" aria-hidden="true">
        <defs>
          <linearGradient id="leaf" x1="0" x2="1">
            <stop offset="0" stopColor="#a8842a" />
            <stop offset=".35" stopColor="#b8782a" />
            <stop offset=".65" stopColor="#c0602c" />
            <stop offset="1" stopColor="#9c4a2c" />
          </linearGradient>
        </defs>
        {/* Dark ground below the petals */}
        <path d="M14 10q24 2 36 30h14q-6-14 8-18 30-2 60 18h110v-10l-60-10z" fill="#4d3e24" />
        <path d="M18 0h226l-6 28q-4-6-8-8l8 12-18 7h-44l-42-6q-26-2-40-12-24-4-36-4-14-4-26-10z" fill="url(#leaf)" />
        <path d="M12 0q6 12 24 10 16 6 16 30h8q0-14 10-19l-26-7q-16-4-20-14z" fill="#6f6138" />
        <path d="M84 4l26 16 36 16-24-4-24-12-14-12z" fill="#54462a" />
        <path d="M160 0h44l12 12 20 14-24-8-20-6 26 16 18 6-36-10-28-16z" fill="#5f4c2e" />
        <path d="M226 0l12 28 2-28z" fill="#a8452c" />
        <path d="M250 0q-6 12-4 40" fill="none" stroke="#98822e" strokeWidth="2" />
        <path d="M11 0q4 6 10 12t10 0q14 4 22 28" fill="none" stroke="#b08f34" strokeWidth="1.500" />
        <path d="M58 38q2-18 20-18 24 2 52 16" fill="none" stroke="#857a54" />
      </svg>
      <button aria-label="Start" className="flex w-[50px] items-center justify-center">
        <svg width="27" height="26" viewBox="0 0 27 26" fill="#fff" aria-hidden="true">
          <path d="M0 4l11-2v10H0zM12 2l15-2v12H12zM0 13h11v10L0 22zM12 13h15v13l-15-2z" />
        </svg>
      </button>
      <button aria-label="File Explorer" className="flex w-16 items-center justify-center">
        <svg width="33" height="30" viewBox="0 0 33 30" aria-hidden="true">
          <path d="M1 4h9l2-3h8l2 3h9v24H1z" fill="#e8cf7a" stroke="#c0a44c" />
          <path d="M3 2h9v4H3zM11 4h9v4h-9zM19 6h9v4h-9z" fill="#fff" />
          <path d="M4 2h3v2H4z" fill="#2a2" /><path d="M12 4h3v2h-3z" fill="#d33" /><path d="M20 6h3v2h-3z" fill="#38c" />
          <path d="M1 9h30v19H1z" fill="#f5e39a" />
          <path d="M5 29V18q0-2 2-2h19q2 0 2 2v11h-5v-7H10v7z" fill="#7cc0e4" stroke="#4c94c0" />
        </svg>
      </button>
      <button aria-label="MetaTrader" className="relative my-px flex w-[58px] items-center justify-center border border-[#e8e4dc] bg-[#948774]">
        <BrandIcon size={32} />
      </button>
      <button aria-label="Chrome" className="relative my-px ml-1 flex w-[58px] items-center justify-center border border-[#9c9080] bg-[#7e6f59]">
        <svg width="32" height="32" viewBox="0 0 32 32" aria-hidden="true">
          <path d="M16 16l7 4-7 12A16 16 0 012.140 8l7 12z" fill="#2c9a46" />
          <path d="M16 8h13.860A16 16 0 0116 32l7-12z" fill="#fbc116" />
          <path d="M16 8h13.860A16 16 0 002.140 8l7 12z" fill="#e33b2e" />
          <circle cx="16" cy="16" r="8" fill="#fff" />
          <circle cx="16" cy="16" r="6.300" fill="#2f74e8" />
        </svg>
      </button>
      <div className="ml-auto flex items-center">
        <button aria-label="Show hidden icons" className="mt-1">
          <svg width="8" height="5" viewBox="0 0 8 5" aria-hidden="true"><path d="M0 5l4-5 4 5z" fill="#fff" /></svg>
        </button>
        <div className="w-[85px] pt-0.5 text-center text-[11px] leading-[17px]">
          <div>6:44 AM</div>
          <div>8/24/2024</div>
        </div>
      </div>
    </div>
  );
}

export default function App() {
  return (
    <div className="min-h-screen overflow-hidden bg-[#f0f0f0] font-['Open_Sans',sans-serif] text-[12px] leading-4 text-black">
      <TitleBar />
      <MenuBar />
      <MainToolbar />
      <LineToolbar />
      <ChartWindow />
      <ChartTabs />
      <StatusBar />
      <Taskbar />
    </div>
  );
}
